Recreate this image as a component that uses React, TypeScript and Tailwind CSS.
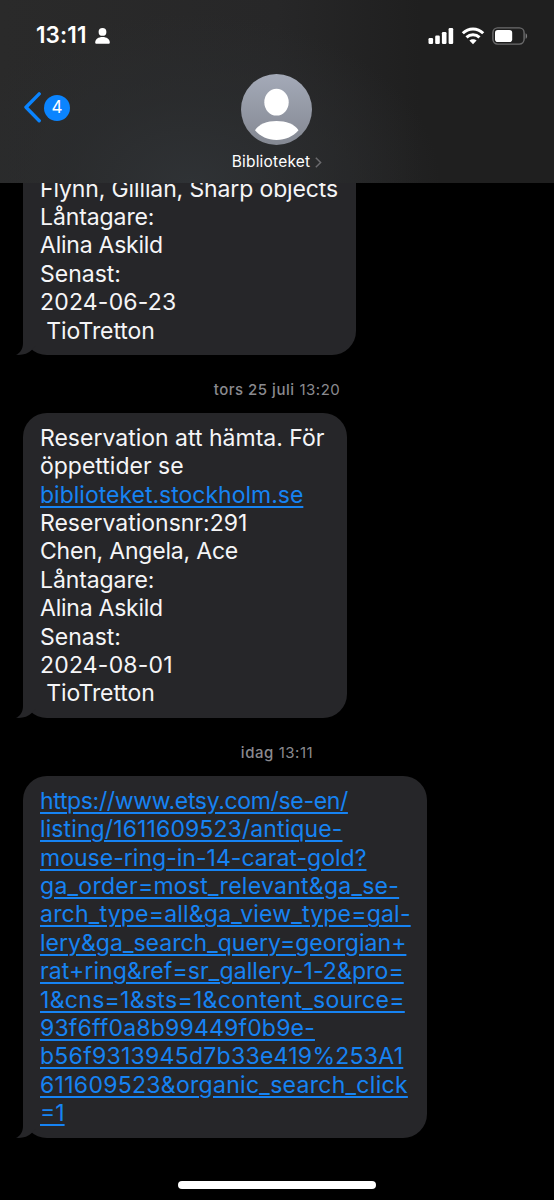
import React from 'react';

interface lineInterface {
  text: string;
  link?: boolean;
  spacing?: string;
}

interface bubbleInterface {
  lines: lineInterface[];
  className: string;
}

const firstMessage: lineInterface[] = [
  { text: 'Flynn, Gillian, Sharp objects', spacing: 'tracking-[-0.13px]' },
  { text: 'Låntagare:', spacing: 'tracking-[-0.1px]' },
  { text: 'Alina Askild', spacing: 'tracking-[-0.24px]' },
  { text: 'Senast:' },
  { text: '2024-06-23', spacing: 'tracking-[0.2px]' },
  { text: ' TioTretton', spacing: 'tracking-[-0.1px]' },
];

const secondMessage: lineInterface[] = [
  { text: 'Reservation att hämta. För' },
  { text: 'öppettider se' },
  { text: 'biblioteket.stockholm.se', link: true },
  { text: 'Reservationsnr:291' },
  { text: 'Chen, Angela, Ace', spacing: 'tracking-[-0.2px]' },
  { text: 'Låntagare:', spacing: 'tracking-[-0.1px]' },
  { text: 'Alina Askild', spacing: 'tracking-[-0.24px]' },
  { text: 'Senast:' },
  { text: '2024-08-01', spacing: 'tracking-[0.2px]' },
  { text: ' TioTretton', spacing: 'tracking-[-0.1px]' },
];

const thirdMessage: lineInterface[] = [
  { text: 'https://www.etsy.com/se-en/', link: true, spacing: 'tracking-[-0.34px]' },
  { text: 'listing/1611609523/antique-', link: true, spacing: 'tracking-[0.11px]' },
  { text: 'mouse-ring-in-14-carat-gold?', link: true, spacing: 'tracking-[0.02px]' },
  { text: 'ga_order=most_relevant&ga_se-', link: true, spacing: 'tracking-[0.27px]' },
  { text: 'arch_type=all&ga_view_type=gal-', link: true, spacing: 'tracking-[0.21px]' },
  { text: 'lery&ga_search_query=georgian+', link: true, spacing: 'tracking-[0.02px]' },
  { text: 'rat+ring&ref=sr_gallery-1-2&pro=', link: true, spacing: 'tracking-[0.11px]' },
  { text: '1&cns=1&sts=1&content_source=', link: true, spacing: 'tracking-[0.31px]' },
  { text: '93f6ff0a8b99449f0b9e-', link: true, spacing: 'tracking-[0.19px]' },
  { text: 'b56f9313945d7b33e419%253A1', link: true, spacing: 'tracking-[0.27px]' },
  { text: '611609523&organic_search_click', link: true, spacing: 'tracking-[0.29px]' },
  { text: '=1', link: true },
];

const Bubble = ({ lines, className }: bubbleInterface) => {
  return (
    <article className={`relative ml-[23px] shrink-0 bg-[#262629] pl-[17px] pt-[11px] pb-[10px] ${className}`}>
      {lines.map((line, index) => (
        <p key={index} className="h-[28.4px] whitespace-pre text-[23px] leading-[28.4px] text-[#f5f5f7]">
          <span
            className={`${line.spacing ?? ''} ${
              line.link ? 'text-[#1683f3] underline decoration-[1.5px] underline-offset-[3px]' : ''
            }`}
          >
            {line.text}
          </span>
        </p>
      ))}
      <svg className="absolute -left-[7px] bottom-0" width="24" height="24" viewBox="0 0 24 24" fill="#262629">
        <path d="M7 0V12C7 17.5 4.5 22 0 23.8C6 24.4 12 23 16 18.8L20 14V0Z" />
      </svg>
    </article>
  );
};

const DateLabel = ({ day, time }: { day: string; time: string }) => {
  return (
    <p className="flex h-[58px] shrink-0 items-center justify-center gap-[5px] pt-[13px] text-[15px] tracking-[0.5px] text-[#8a8a8f]">
      <span className="font-medium">{day}</span>
      <span>{time}</span>
    </p>
  );
};

const StatusBar = () => {
  return (
    <div className="flex h-[71px] items-center justify-between pl-[36px] pr-[26px] text-white">
      <div className="flex items-center gap-[8px]">
        <span className="text-[22.5px] font-semibold leading-none tracking-[0.1px]">13:11</span>
        <svg width="15" height="16" viewBox="0 0 15 16" fill="white">
          <circle cx="7.5" cy="3.9" r="3.9" />
          <path d="M0.2 14.5C0.2 11.2 3.4 9 7.5 9S14.8 11.2 14.8 14.5C14.8 15.3 14.3 15.8 13.5 15.8H1.5C0.7 15.8 0.2 15.3 0.2 14.5Z" />
        </svg>
      </div>
      <div className="flex items-center gap-[7px]">
        <svg width="26" height="18" viewBox="0 0 26 18" fill="white">
          <rect x="0.5" y="11" width="4.6" height="6" rx="1.2" />
          <rect x="7.2" y="8.5" width="4.6" height="8.5" rx="1.2" />
          <rect x="13.9" y="5" width="4.6" height="12" rx="1.2" />
          <rect x="20.6" y="1" width="4.6" height="16" rx="1.2" />
        </svg>
        <svg width="24" height="18" viewBox="0 0 24 18" fill="none" stroke="white" strokeWidth="3">
          <path d="M1.8 6.2C7.5 0.5 16.5 0.5 22.2 6.2" />
          <path d="M5.5 10.4C9.1 6.9 14.9 6.9 18.5 10.4" />
          <path d="M12 17.2L8.4 13.6C10.4 11.8 13.6 11.8 15.6 13.6Z" fill="white" stroke="none" />
        </svg>
        <svg width="36" height="18" viewBox="0 0 36 18" fill="none">
          <rect x="0.9" y="0.9" width="31.2" height="16.2" rx="4.8" stroke="#6c6c6d" strokeWidth="1.4" />
          <rect x="3" y="3" width="17.2" height="12" rx="2.8" fill="white" />
          <path d="M33.6 6.2C35.6 7 35.6 11 33.6 11.8Z" fill="#7b7b7c" />
        </svg>
      </div>
    </div>
  );
};

const App = () => {
  return (
    <div className="flex h-[1200px] w-[554px] flex-col overflow-hidden bg-black font-['Inter','Liberation_Sans',sans-serif]">
      <header className="z-10 h-[183px] shrink-0 bg-[radial-gradient(ellipse_250px_170px_at_190px_183px,#2f3235_0%,#2b2d2fb0_50%,#26262600_100%),linear-gradient(90deg,#2a2a2a_0%,#272728_50%,#1f1f1f_76%,#1f1f1f_100%)]">
        <StatusBar />
        <div className="grid grid-cols-3 px-[24px]">
          <div className="flex items-center gap-[3px] self-start pt-[21px]">
            <svg width="17" height="31" viewBox="0 0 17 31" fill="none" stroke="#0a84ff" strokeWidth="3.4" strokeLinecap="round" strokeLinejoin="round">
              <path d="M15.2 1.9L2 15.3L15.2 28.7" />
            </svg>
            <span className="grid h-[26px] w-[26px] place-items-center rounded-full bg-[#0a84ff] text-[17px] leading-none text-white">4</span>
          </div>
          <div className="flex flex-col items-center pt-[3px]">
            <svg width="71" height="71" viewBox="0 0 71 71">
              <defs>
                <linearGradient id="avatar" x1="0" y1="0" x2="0" y2="1">
                  <stop offset="0" stopColor="#a4aab8" />
                  <stop offset="1" stopColor="#848892" />
                </linearGradient>
              </defs>
              <circle cx="35.5" cy="35.5" r="35.5" fill="url(#avatar)" />
              <ellipse cx="35.5" cy="28.2" rx="12.2" ry="13.4" fill="white" />
              <path d="M14 56.3C18 50 26 47 35.5 47S53.5 50 57.5 56.3C52 62.5 44.5 66 35.5 66S19.5 62.5 14 56.3Z" fill="white" />
            </svg>
            <div className="flex items-center gap-[5px] pt-[5px] text-[15.5px] leading-[24px] tracking-[0.2px] text-white">
              <span>Biblioteket</span>
              <svg width="7" height="11" viewBox="0 0 7 11" fill="none" stroke="#6b6b6e" strokeWidth="1.5">
                <path d="M0.8 0.8L5.6 5.5L0.8 10.2" />
              </svg>
            </div>
          </div>
        </div>
      </header>

      <main className="flex min-h-0 flex-1 flex-col justify-end">
        <Bubble lines={firstMessage} className="w-[332.5px] rounded-b-[24px]" />
        <DateLabel day="tors 25 juli" time="13:20" />
        <Bubble lines={secondMessage} className="w-[324px] rounded-[24px]" />
        <DateLabel day="idag" time="13:11" />
        <Bubble lines={thirdMessage} className="w-[404px] rounded-[24px]" />
      </main>

      <footer className="flex h-[62.5px] shrink-0 items-end justify-center pb-[11px]">
        <div className="h-[8px] w-[198px] rounded-full bg-white" />
      </footer>
    </div>
  );
};

export default App;
